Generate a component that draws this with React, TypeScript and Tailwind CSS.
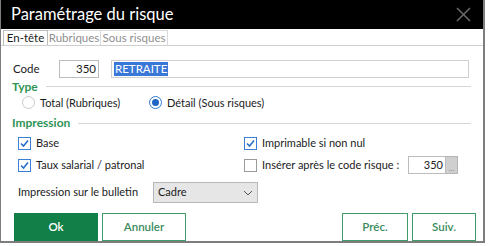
import React from 'react';

const font = { fontFamily: 'Lato, "Noto Sans", sans-serif' };

const Check = ({ checked }: { checked: boolean }) => (
  <div
    className={`w-[13px] h-[13px] border flex items-center justify-center bg-white ${
      checked ? 'border-[#3c7fd6]' : 'border-[#9a9a9a]'
    }`}
  >
    {checked && (
      <svg width="11" height="11" viewBox="0 0 11 11">
        <path d="M2 5.5 L4.5 8 L9 2.5" fill="none" stroke="#2b6fc9" strokeWidth="1.6" />
      </svg>
    )}
  </div>
);

const Radio = ({ checked }: { checked: boolean }) => (
  <div
    className={`w-[13px] h-[13px] rounded-full border flex items-center justify-center bg-white ${
      checked ? 'border-[#2f78d4]' : 'border-[#c9c9c9]'
    }`}
  >
    {checked && <div className="w-[7px] h-[7px] rounded-full bg-[#1f66c4]" />}
  </div>
);

const Section = ({ label }: { label: string }) => (
  <div className="flex items-center gap-[8px] pr-[12px]">
    <span className="text-[12px] font-bold text-[#2f9457] leading-none">{label}</span>
    <div className="flex-1 h-px bg-[#d6d6d6]" />
  </div>
);

export default function App() {
  return (
    <div className="w-[489px] h-[246px] bg-white overflow-hidden text-[#1b1b1b]" style={font}>
      <div className="w-[485px] h-[243px] border-l border-r-2 border-b-2 border-[#7d7d7d] flex flex-col">
        <div className="h-[32px] bg-black flex items-center justify-between pl-[10px] pr-[12px]">
          <span className="text-white text-[16.5px] leading-none">Paramétrage du risque</span>
          <svg width="15" height="15" viewBox="0 0 15 15">
            <path d="M1 1 L14 14 M14 1 L1 14" stroke="#6b6b6b" strokeWidth="1.5" />
          </svg>
        </div>

        <div className="flex h-[17px] mt-[1px] pl-[2px] border-b border-[#cfcfcf] text-[11.5px] leading-none">
          <div className="w-[45px] justify-center flex items-center border border-b-0 border-[#bdbdbd] bg-white">En-tête</div>
          <div className="w-[53px] justify-center flex items-center border-r border-t border-[#d9d9d9] text-[#8f8f8f]">Rubriques</div>
          <div className="w-[67px] justify-center flex items-center border-r border-t border-[#d9d9d9] text-[#8f8f8f]">Sous risques</div>
        </div>

        <div className="flex items-center mt-[14px] pl-[12px] text-[11.5px]">
          <span className="w-[46px]">Code</span>
          <div className="w-[40px] h-[18px] border border-[#bcbcbc] flex items-center justify-end pr-[2px]">350</div>
          <div className="ml-[12px] w-[358px] h-[18px] border border-[#cfcfcf] flex items-center pl-[2px]">
            <span className="bg-[#3a78d8] text-white px-[1px] leading-[14px]">RETRAITE</span>
          </div>
        </div>

        <div className="pl-[11px] mt-[3px]">
          <Section label="Type" />
        </div>

        <div className="flex items-center mt-[2px] pl-[21px] text-[11px]">
          <div className="flex items-center gap-[5px] w-[127px]">
            <Radio checked={false} />
            <span>Total (Rubriques)</span>
          </div>
          <div className="flex items-center gap-[5px]">
            <Radio checked />
            <span>Détail (Sous risques)</span>
          </div>
        </div>

        <div className="pl-[11px] mt-[6px]">
          <Section label="Impression" />
        </div>

        <div className="grid grid-cols-[226px_1fr] pl-[17px] mt-[7px] text-[11px] gap-y-[8px]">
          <div className="flex items-center gap-[5px] h-[14px]">
            <Check checked />
            <span>Base</span>
          </div>
          <div className="flex items-center gap-[5px] h-[14px]">
            <Check checked />
            <span>Imprimable si non nul</span>
          </div>
          <div className="flex items-center gap-[5px] h-[14px]">
            <Check checked />
            <span>Taux salarial / patronal</span>
          </div>
          <div className="flex items-center gap-[5px] h-[14px]">
            <Check checked={false} />
            <span className="w-[141px] whitespace-nowrap">Insérer après le code risque :</span>
            <div className="flex h-[18px]">
              <div className="w-[38px] border border-[#bcbcbc] flex items-center justify-end pr-[2px]">350</div>
              <div className="w-[12px] bg-[#cfcfcf] border border-[#b5b5b5] border-l-0 flex items-end justify-center text-[8px] leading-[10px] text-[#888]">...</div>
            </div>
          </div>
        </div>

        <div className="flex items-center pl-[17px] mt-[10px] text-[11px]">
          <span className="w-[135px]">Impression sur le bulletin</span>
          <div className="w-[105px] h-[21px] bg-[#e6e6e6] border border-[#b8b8b8] flex items-center justify-between pl-[4px] pr-[4px]">
            <span>Cadre</span>
            <svg width="10" height="6" viewBox="0 0 10 6">
              <path d="M1 1 L5 5 L9 1" fill="none" stroke="#555" strokeWidth="1" />
            </svg>
          </div>
        </div>

        <div className="flex items-center mt-[10px] pl-[13px] pr-[7px] text-[11.5px] font-semibold">
          <div className="w-[84px] h-[28px] bg-[#137f48] text-white flex items-center justify-center">Ok</div>
          <div className="ml-[4px] w-[84px] h-[28px] border border-[#3f9d6c] text-[#3a8a5d] flex items-center justify-center">Annuler</div>
          <div className="flex-1" />
          <div className="w-[66px] h-[28px] border border-[#3f9d6c] text-[#3a8a5d] flex items-center justify-center">Préc.</div>
          <div className="ml-[4px] w-[64px] h-[28px] border border-[#3f9d6c] text-[#3a8a5d] flex items-center justify-center">Suiv.</div>
        </div>
      </div>
    </div>
  );
}
